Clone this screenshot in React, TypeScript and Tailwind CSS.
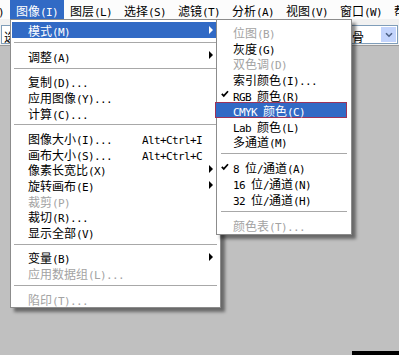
import React from 'react'

type Item = {
  t?: string
  k?: string
  sub?: boolean
  dis?: boolean
  hi?: boolean
  chk?: boolean
  sep?: boolean
}

const bar = ['图像(I)', '图层(L)', '选择(S)', '滤镜(T)', '分析(A)', '视图(V)', '窗口(W)', '帮助(H)']

const imageMenu: Item[] = [
  { t: '模式(M)', sub: true, hi: true },
  { sep: true },
  { t: '调整(A)', sub: true },
  { sep: true },
  { t: '复制(D)...' },
  { t: '应用图像(Y)...' },
  { t: '计算(C)...' },
  { sep: true },
  { t: '图像大小(I)...', k: 'Alt+Ctrl+I' },
  { t: '画布大小(S)...', k: 'Alt+Ctrl+C' },
  { t: '像素长宽比(X)', sub: true },
  { t: '旋转画布(E)', sub: true },
  { t: '裁剪(P)', dis: true },
  { t: '裁切(R)...' },
  { t: '显示全部(V)' },
  { sep: true },
  { t: '变量(B)', sub: true },
  { t: '应用数据组(L)...', dis: true },
  { sep: true },
  { t: '陷印(T)...', dis: true },
]

const modeMenu: Item[] = [
  { t: '位图(B)', dis: true },
  { t: '灰度(G)' },
  { t: '双色调(D)', dis: true },
  { t: '索引颜色(I)...' },
  { t: 'RGB 颜色(R)', chk: true },
  { t: 'CMYK 颜色(C)', hi: true },
  { t: 'Lab 颜色(L)' },
  { t: '多通道(M)' },
  { sep: true },
  { t: '8 位/通道(A)', chk: true },
  { t: '16 位/通道(N)' },
  { t: '32 位/通道(H)' },
  { sep: true },
  { t: '颜色表(T)...', dis: true },
]

const CJK = /[\u2E80-\u9FFF\u3000-\u303F\uFF00-\uFFEF]/

// chinese glyphs 12px wide, latin in a 6px mono cell like the old bitmap font
function Txt({ s }: { s: string }) {
  const runs: { cjk: boolean; t: string }[] = []
  for (const ch of s) {
    const cjk = CJK.test(ch)
    const last = runs[runs.length - 1]
    if (last && last.cjk === cjk) last.t += ch
    else runs.push({ cjk, t: ch })
  }
  return (
    <span className="whitespace-pre">
      {runs.map((r, i) =>
        r.cjk ? (
          <span key={i} className="font-['Noto_Sans_CJK_SC',sans-serif] text-[12px]">
            {r.t}
          </span>
        ) : (
          <span key={i} className="font-['DejaVu_Sans_Mono',monospace] text-[11px] tracking-[-0.62px]">
            {r.t}
          </span>
        )
      )}
    </span>
  )
}

function Arrow({ white }: { white?: boolean }) {
  return (
    <span
      className={`w-0 h-0 border-y-[4px] border-y-transparent border-l-[4px] ${
        white ? 'border-l-white' : 'border-l-black'
      }`}
    />
  )
}

function Check() {
  return (
    <svg width="8" height="8" viewBox="0 0 8 8" className="absolute left-[4px] top-1/2 -translate-y-1/2">
      <path d="M0.8 3.8 L2.8 5.9 L7 1.2" fill="none" stroke="#000" strokeWidth="1.7" />
    </svg>
  )
}

function Sep({ h, m }: { h: string; m: string }) {
  return (
    <div className={`${h} ${m} flex items-center`}>
      <div className="h-px w-full bg-[#a8a8a8]" />
    </div>
  )
}

export default function App() {
  return (
    <div className="relative w-[399px] h-[355px] overflow-hidden flex flex-col bg-[#c0c0c0] text-black leading-none font-['Noto_Sans_CJK_SC',sans-serif]">
      {/* menu bar */}
      <div className="h-[19px] flex shrink-0 bg-[#fcfcfc] whitespace-nowrap">
        <div className="ml-[-44px] w-[54px] shrink-0 pl-[6px] flex items-center">
          <Txt s="编辑(E)" />
        </div>
        {bar.map((b, i) => (
          <div
            key={b}
            className={`w-[54px] shrink-0 pl-[6px] flex items-center ${
              i === 0 ? 'bg-[#316ac5] text-white' : ''
            }`}
          >
            <Txt s={b} />
          </div>
        ))}
      </div>

      {/* options bar */}
      <div className="h-[27px] shrink-0 flex items-start bg-[#f1f1f1] border-b border-[#9a9a9a]">
        <div className="ml-[1px] mt-[6px] h-[19px] w-[80px] border border-[#7f9db9] bg-white flex items-center pl-[2px]">
          <Txt s="选区" />
        </div>
        <div className="ml-auto mr-[1px] mt-[6px] h-[19px] w-[50px] border border-[#7f9db9] bg-white flex items-center">
          <div className="flex-1 pl-[3px]">
            <Txt s="骨" />
          </div>
          <div className="w-[15px] h-[15px] mr-[1px] bg-[#c3d4fc] flex items-center justify-center">
            <svg width="8" height="6" viewBox="0 0 8 6">
              <path d="M1 1.2 L4 4.2 L7 1.2" fill="none" stroke="#4d6185" strokeWidth="1.6" />
            </svg>
          </div>
        </div>
      </div>

      <div className="flex-1" />
      <div className="h-[4px] flex justify-end">
        <div className="w-[47px] bg-black" />
      </div>

      {/* Image menu */}
      <div className="absolute left-[10px] top-[19px] w-[211px] pt-[2px] pb-[1px] bg-white border border-[#8c8c8c] shadow-[4px_4px_3px_rgba(0,0,0,0.45)]">
        {imageMenu.map((it, i) =>
          it.sep ? (
            <Sep key={i} h="h-[10px]" m="mx-[3px]" />
          ) : (
            <div
              key={i}
              className={`h-[15.6px] mx-[1px] pl-[16px] pr-[6px] flex items-center ${
                it.hi ? 'bg-[#316ac5] text-white' : it.dis ? 'text-[#a3a3a3]' : ''
              }`}
            >
              <span className="flex-1">
                <Txt s={it.t!} />
              </span>
              {it.k && (
                <span className="mr-[7px]">
                  <Txt s={it.k} />
                </span>
              )}
              <span className="w-[4px] flex items-center">{it.sub && <Arrow white={it.hi} />}</span>
            </div>
          )
        )}
      </div>

      {/* Mode submenu */}
      <div className="absolute left-[216px] top-[19px] w-[136px] pt-[4px] pb-[2px] bg-white border border-[#8c8c8c] shadow-[4px_4px_3px_rgba(0,0,0,0.45)]">
        {modeMenu.map((it, i) =>
          it.sep ? (
            <Sep key={i} h="h-[10.4px]" m="mx-[4px]" />
          ) : (
            <div
              key={i}
              className={`relative h-[15.6px] pl-[16px] flex items-center ${
                it.hi ? 'text-white' : it.dis ? 'text-[#a3a3a3]' : ''
              }`}
            >
              {it.hi && (
                <div className="absolute inset-y-0 left-[-2px] right-[4px] bg-[#316ac5] border-[1.5px] border-[#9c3358]" />
              )}
              {it.chk && <Check />}
              <span className="relative">
                <Txt s={it.t!} />
              </span>
            </div>
          )
        )}
      </div>
    </div>
  )
}
